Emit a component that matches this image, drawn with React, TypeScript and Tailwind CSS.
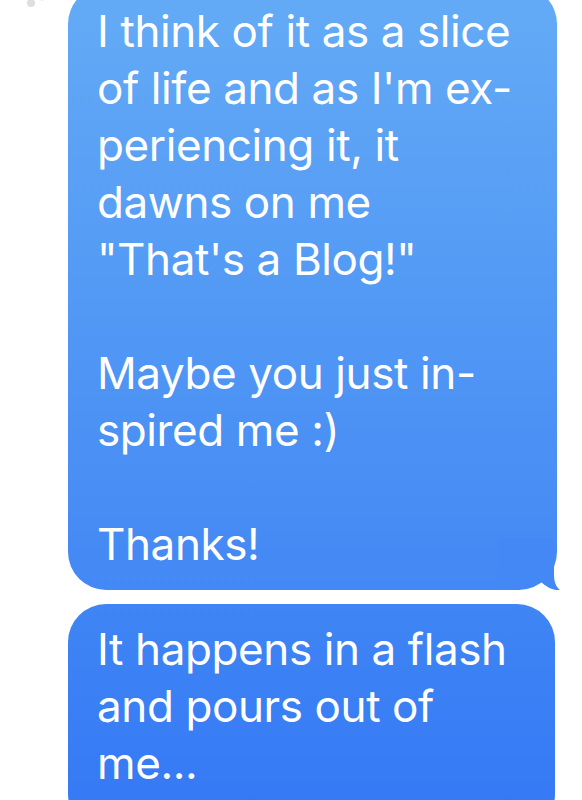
const font = { fontFamily: "Inter, 'Noto Sans', sans-serif" };

const first = [
  "I think of it as a slice",
  "of life and as I'm ex-",
  "periencing it, it",
  "dawns on me",
  "\"That's a Blog!\"",
  "",
  "Maybe you just in-",
  "spired me :)",
  "",
  "Thanks!",
];

const second = ["It happens in a flash", "and pours out of", "me..."];

function Lines({ lines }: { lines: string[] }) {
  return (
    <>
      {lines.map((l, i) => (
        <p key={i} className="h-[57px] whitespace-pre">
          {l || " "}
        </p>
      ))}
    </>
  );
}

export default function App() {
  return (
    <div className="relative w-[582px] h-[800px] overflow-hidden bg-white" style={font}>
      {/* leftover tapback dots */}
      <div className="absolute left-[27px] top-[-1px] w-[8px] h-[8px] rounded-full bg-[#dedede]" />
      <div className="absolute left-[40px] top-[-3px] w-[4px] h-[4px] rounded-full bg-[#eeeeee]" />

      <div className="flex flex-col gap-[14px] pl-[68px] mt-[-14px]">
        {/* tailed bubble */}
        <div className="relative w-[489px] rounded-[38px] bg-gradient-to-b from-[#64abf6] to-[#4388f4] px-[29px] py-[17px] text-white text-[44px] leading-[57px] tracking-[-0.4px]">
          <Lines lines={first} />
          <svg
            className="absolute right-[-6px] bottom-[-1px]"
            width="66"
            height="52"
            viewBox="0 0 66 52"
          >
            <path
              d="M0 0 H57 V35 C57 43 59 48 63 51 C56 51.5 49 48 43 42 C37 47 28 50 18 50 H0 Z"
              fill="#4388f4"
            />
          </svg>
        </div>

        <div className="w-[487px] rounded-[38px] bg-gradient-to-b from-[#3f85f4] to-[#3478f5] px-[29px] pt-[17px] pb-[40px] text-white text-[44px] leading-[57px] tracking-[-0.4px]">
          <Lines lines={second} />
        </div>
      </div>
    </div>
  );
}
